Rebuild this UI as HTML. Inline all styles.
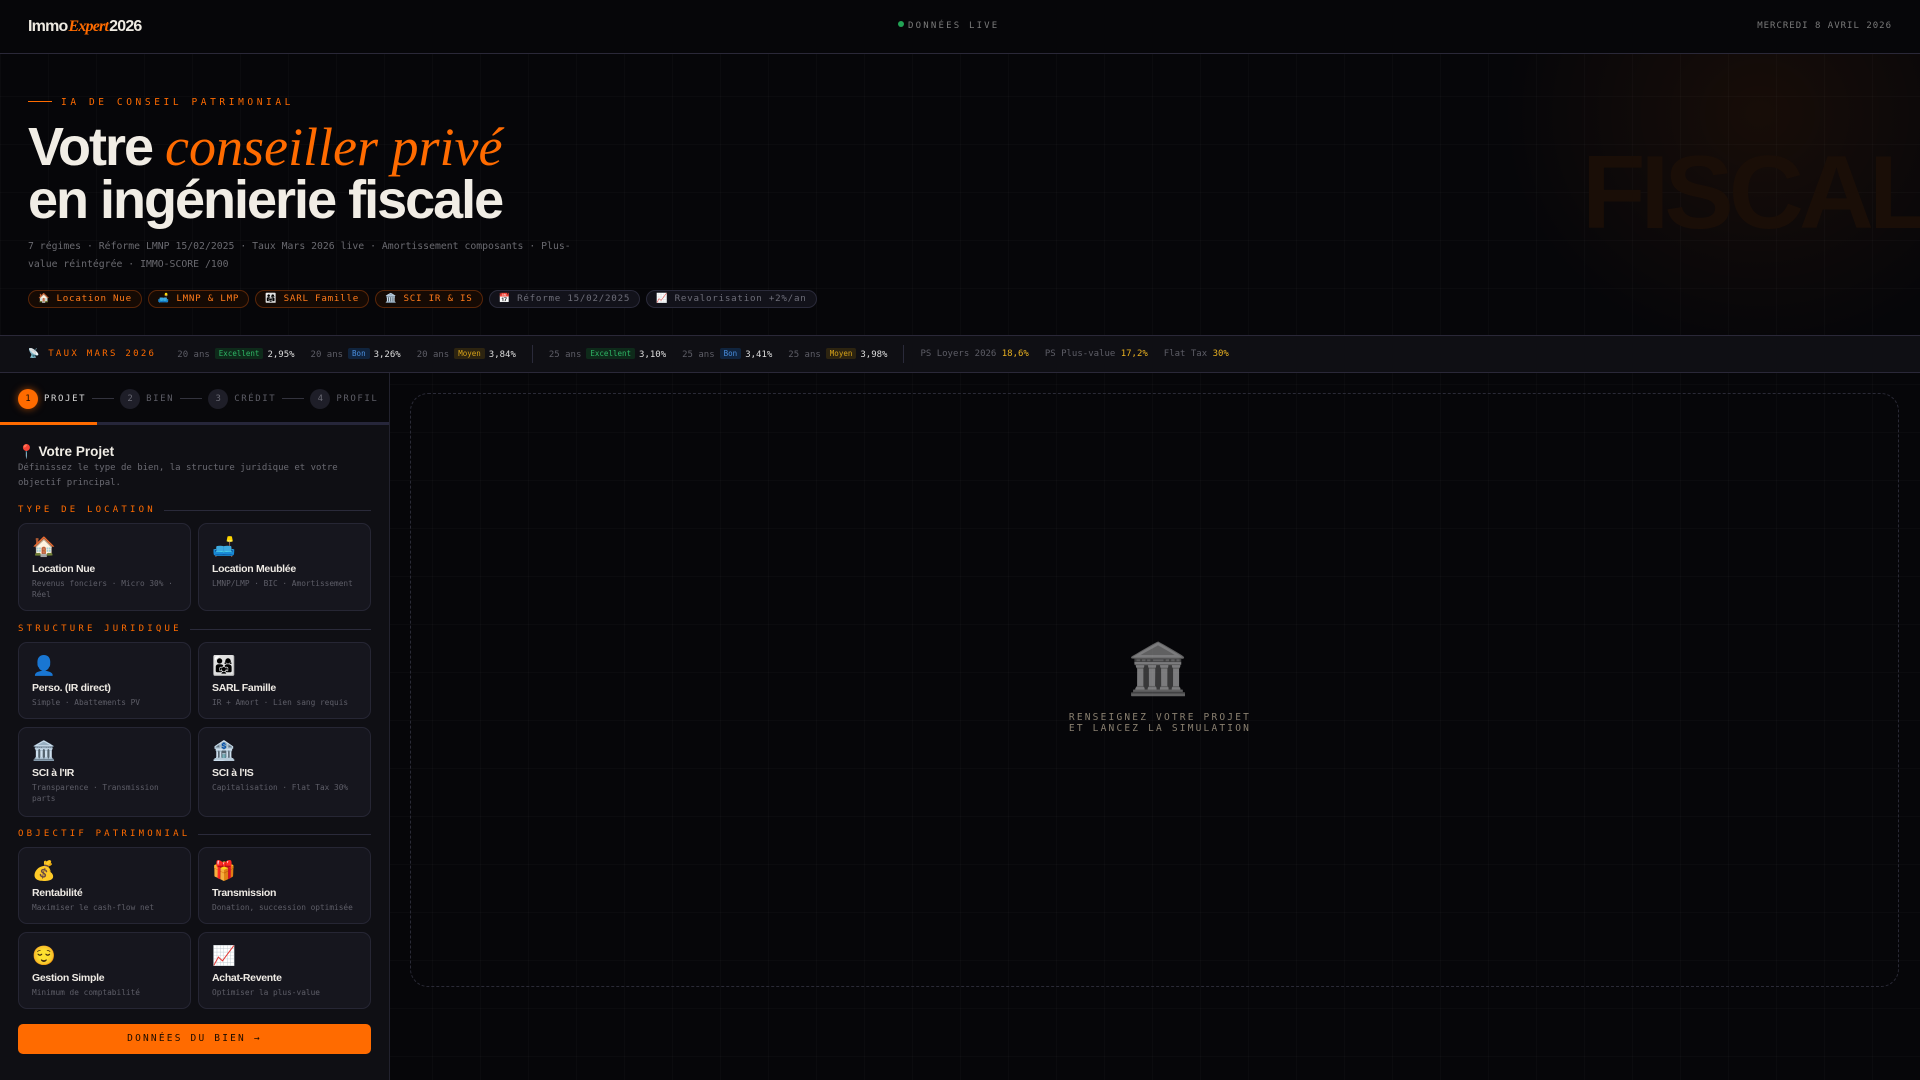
<!DOCTYPE html>
<html><head><meta charset="utf-8">
<style>
*{margin:0;padding:0;box-sizing:border-box}
html,body{width:1920px;height:1080px;overflow:hidden;background:#060609;color:#eee;font-family:"Liberation Sans",sans-serif}
.mono{font-family:"DejaVu Sans Mono","Liberation Mono",monospace}
.grid{position:absolute;inset:0;background-image:linear-gradient(rgba(255,255,255,0.018) 1px,transparent 1px),linear-gradient(90deg,rgba(255,255,255,0.018) 1px,transparent 1px);background-size:48px 48px;pointer-events:none}
header{position:absolute;left:0;top:0;width:1920px;height:54px;border-bottom:1px solid #2a2838;background:#060609;z-index:2}
.logo{position:absolute;left:28px;top:18px;font-size:16px;font-weight:bold;color:#eeeae2;letter-spacing:-0.8px}
.logo i{font-family:"Liberation Serif",serif;color:#ff6b00;font-weight:bold;margin:0 1px}
.live{position:absolute;left:898px;top:21px;font-size:9px;letter-spacing:2.2px;color:#7a7a7a}
.live b{display:inline-block;width:6px;height:6px;border-radius:50%;background:#22a355;margin-right:4px;vertical-align:1px}
.date{position:absolute;right:28px;top:21px;font-size:9px;letter-spacing:1px;color:#7a7a7a}
.hero{position:absolute;left:0;top:54px;width:1920px;height:281px;overflow:hidden;background:radial-gradient(ellipse 260px 240px at 1760px 60px,rgba(255,107,0,0.07),transparent 100%)}
.fiscal{position:absolute;left:1582px;top:80px;font-size:104px;font-weight:bold;color:#1a0e07;letter-spacing:-5px;white-space:nowrap}
.eyebrow{position:absolute;left:28px;top:43px;font-size:9.5px;letter-spacing:3.6px;color:#ff6b00}
.eyebrow span{display:inline-block;width:24px;height:1px;background:#ff6b00;vertical-align:3px;margin-right:9px}
h1{position:absolute;left:28px;top:67px;font-size:54px;line-height:53px;font-weight:bold;letter-spacing:-2px;color:#f1ede5;white-space:nowrap}
h1 em{font-family:"Liberation Serif",serif;font-weight:normal;color:#ff6b00;letter-spacing:0}
.sub{position:absolute;left:28px;top:184px;width:570px;font-size:9.8px;line-height:18px;color:#6a6a70}
.tags{position:absolute;left:28px;top:236px;display:flex;gap:6px}
.tag{height:18px;border-radius:9px;border:1px solid #5a2608;background:#150a04;color:#ff7a1a;font-size:9.2px;letter-spacing:0.75px;padding:0 9px;line-height:16px;white-space:nowrap}
.tag.g{border-color:#2a2a3a;background:#12121a;color:#6d6d78}
.rates{position:absolute;left:0;top:335px;width:1920px;height:38px;background:#0f0f14;border-top:1px solid #2a2838;border-bottom:1px solid #2a2838;display:flex;align-items:center;padding-left:28px;font-size:9px;white-space:nowrap}
.rates .t{color:#ff6b00;letter-spacing:2.3px;margin:0 21px 0 9px}
.r{color:#5d5d66;margin-right:16px}
.r .v{color:#ddd}
.bd{display:inline-block;font-size:7.5px;padding:1px 4px;border-radius:2px;margin:0 4px 0 5px;vertical-align:1px}
.ex{background:#0e2a1a;color:#2fb565}
.bo{background:#10243e;color:#4a8fe0}
.mo{background:#2d2410;color:#d6a21a}
.y{color:#e8b020}
.sep{width:1px;height:18px;background:#2a2a3a;margin:0 16px 0 0}
.left{position:absolute;left:0;top:373px;width:390px;height:707px;background:#0f0f14;border-right:1px solid #22222e}
.steps{height:51px;background:#08080b;position:relative;display:flex;align-items:center;padding-left:18px;font-size:9px;letter-spacing:1.6px;color:#5d5d66}
.c{width:20px;height:20px;border-radius:50%;background:#1e1e28;color:#6a6a74;text-align:center;line-height:20px;letter-spacing:0;margin-right:6px;font-size:9px}
.c.on{background:#ff6b00;color:#1a0a00;box-shadow:0 0 8px rgba(255,107,0,.6)}
.st.on{color:#d8d8d8}
.ln{width:22px;height:1px;background:#33333e;margin:0 6px}
.prog{position:absolute;left:0;top:49px;width:389px;height:3px;background:#26263a}
.prog i{display:block;width:97px;height:3px;background:#ff6b00}
.ttl{position:absolute;left:18px;top:71px;font-size:13.5px;font-weight:bold;color:#f0ede6}
.desc{position:absolute;left:18px;top:88px;width:350px;font-size:9px;line-height:15px;color:#6a6a72}
.sec{position:absolute;left:18px;width:353px;font-size:9px;letter-spacing:3.2px;color:#ff6b00;display:flex;align-items:center;white-space:nowrap}
.sec:after{content:"";flex:1;height:1px;background:#2a2a3a;margin-left:8px}
.card{position:absolute;width:173px;background:#16161e;border:1px solid #262634;border-radius:9px;padding:13px 13px}
.card .ic{font-size:19px;line-height:22px;height:22px}
.card .n{font-size:10.5px;font-weight:bold;color:#eeeae4;margin-top:4px;letter-spacing:-.3px}
.card .d{font-size:7.8px;color:#5e5e68;line-height:11px;margin-top:3px}
.btn{position:absolute;left:18px;top:651px;width:353px;height:30px;background:#ff6b00;border-radius:5px;color:#1a0b00;font-size:9.5px;letter-spacing:2.2px;text-align:center;line-height:30px}
.box{position:absolute;left:410px;top:393px;width:1489px;height:594px;border:1px dashed #2a2a36;border-radius:18px}
.bic{position:absolute;left:1127px;top:640px;font-size:50px;filter:grayscale(1);opacity:.55}
.btx{position:absolute;left:1000px;width:320px;top:712px;text-align:center;font-size:9.5px;letter-spacing:2.2px;line-height:11px;color:#8a8070}
</style></head><body>
<div class="grid"></div>
<header>
<div class="logo">Immo<i>Expert</i>2026</div>
<div class="live mono"><b></b>DONNÉES LIVE</div>
<div class="date mono">MERCREDI 8 AVRIL 2026</div>
</header>
<div class="hero">
<div class="fiscal">FISCAL</div>
<div class="eyebrow mono"><span></span>IA DE CONSEIL PATRIMONIAL</div>
<h1>Votre <em>conseiller privé</em><br>en ingénierie fiscale</h1>
<div class="sub mono">7 régimes · Réforme LMNP 15/02/2025 · Taux Mars 2026 live · Amortissement composants · Plus-value réintégrée · IMMO-SCORE /100</div>
<div class="tags mono">
<div class="tag">🏠 Location Nue</div>
<div class="tag">🛋️ LMNP &amp; LMP</div>
<div class="tag">👨‍👩‍👧 SARL Famille</div>
<div class="tag">🏛️ SCI IR &amp; IS</div>
<div class="tag g">📅 Réforme 15/02/2025</div>
<div class="tag g">📈 Revalorisation +2%/an</div>
</div>
</div>
<div class="rates mono">
<span>📡</span><span class="t">TAUX MARS 2026</span>
<span class="r">20 ans<span class="bd ex">Excellent</span><span class="v">2,95%</span></span>
<span class="r">20 ans<span class="bd bo">Bon</span><span class="v">3,26%</span></span>
<span class="r">20 ans<span class="bd mo">Moyen</span><span class="v">3,84%</span></span>
<span class="sep"></span>
<span class="r">25 ans<span class="bd ex">Excellent</span><span class="v">3,10%</span></span>
<span class="r">25 ans<span class="bd bo">Bon</span><span class="v">3,41%</span></span>
<span class="r">25 ans<span class="bd mo">Moyen</span><span class="v">3,98%</span></span>
<span class="sep"></span>
<span class="r">PS Loyers 2026 <span class="y">18,6%</span></span>
<span class="r">PS Plus-value <span class="y">17,2%</span></span>
<span class="r">Flat Tax <span class="y">30%</span></span>
</div>
<div class="left">
<div class="steps mono">
<span class="c on">1</span><span class="st on">PROJET</span><span class="ln"></span>
<span class="c">2</span><span class="st">BIEN</span><span class="ln"></span>
<span class="c">3</span><span class="st">CRÉDIT</span><span class="ln"></span>
<span class="c">4</span><span class="st">PROFIL</span>
<div class="prog"><i></i></div>
</div>
<div class="ttl">📍 Votre Projet</div>
<div class="desc mono">Définissez le type de bien, la structure juridique et votre objectif principal.</div>
<div class="sec mono" style="top:132px">TYPE DE LOCATION</div>
<div class="card" style="left:18px;top:150px;height:88px"><div class="ic">🏠</div><div class="n">Location Nue</div><div class="d mono">Revenus fonciers · Micro 30% · Réel</div></div>
<div class="card" style="left:198px;top:150px;height:88px"><div class="ic">🛋️</div><div class="n">Location Meublée</div><div class="d mono">LMNP/LMP · BIC · Amortissement</div></div>
<div class="sec mono" style="top:251px">STRUCTURE JURIDIQUE</div>
<div class="card" style="left:18px;top:269px;height:77px"><div class="ic">👤</div><div class="n">Perso. (IR direct)</div><div class="d mono">Simple · Abattements PV</div></div>
<div class="card" style="left:198px;top:269px;height:77px"><div class="ic">👨‍👩‍👧</div><div class="n">SARL Famille</div><div class="d mono">IR + Amort · Lien sang requis</div></div>
<div class="card" style="left:18px;top:354px;height:90px"><div class="ic">🏛️</div><div class="n">SCI à l'IR</div><div class="d mono">Transparence · Transmission parts</div></div>
<div class="card" style="left:198px;top:354px;height:90px"><div class="ic">🏦</div><div class="n">SCI à l'IS</div><div class="d mono">Capitalisation · Flat Tax 30%</div></div>
<div class="sec mono" style="top:456px">OBJECTIF PATRIMONIAL</div>
<div class="card" style="left:18px;top:474px;height:77px"><div class="ic">💰</div><div class="n">Rentabilité</div><div class="d mono">Maximiser le cash-flow net</div></div>
<div class="card" style="left:198px;top:474px;height:77px"><div class="ic">🎁</div><div class="n">Transmission</div><div class="d mono">Donation, succession optimisée</div></div>
<div class="card" style="left:18px;top:559px;height:77px"><div class="ic">😌</div><div class="n">Gestion Simple</div><div class="d mono">Minimum de comptabilité</div></div>
<div class="card" style="left:198px;top:559px;height:77px"><div class="ic">📈</div><div class="n">Achat-Revente</div><div class="d mono">Optimiser la plus-value</div></div>
<div class="btn mono">DONNÉES DU BIEN →</div>
</div>
<div class="box"></div>
<div class="bic">🏛️</div>
<div class="btx mono">RENSEIGNEZ VOTRE PROJET<br>ET LANCEZ LA SIMULATION</div>
</body></html>
